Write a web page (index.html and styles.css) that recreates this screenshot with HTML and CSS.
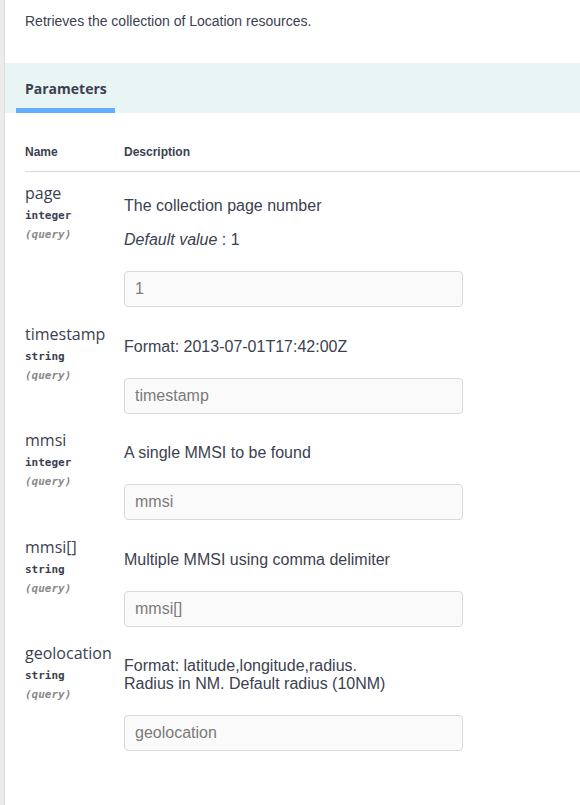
FILE: index.html
```html
<!DOCTYPE html>
<html lang="en">
<head>
<meta charset="utf-8">
<title>Parameters</title>
<link rel="stylesheet" href="styles.css">
</head>
<body>
<div class="opblock">
  <div class="opblock-body">
    <p class="summary">Retrieves the collection of Location resources.</p>
    <div class="section-header">
      <div class="tab">Parameters</div>
    </div>
    <div class="table-container">
      <table class="parameters">
        <thead>
          <tr>
            <th class="col-name">Name</th>
            <th>Description</th>
          </tr>
        </thead>
        <tbody>
          <tr>
            <td class="col-name">
              <div class="param-name">page</div>
              <div class="param-type">integer</div>
              <div class="param-in">(query)</div>
            </td>
            <td class="col-desc">
              <p>The collection page number</p>
              <p><i>Default value</i> : 1</p>
              <input type="text" placeholder="1">
            </td>
          </tr>
          <tr>
            <td class="col-name">
              <div class="param-name">timestamp</div>
              <div class="param-type">string</div>
              <div class="param-in">(query)</div>
            </td>
            <td class="col-desc">
              <p>Format: 2013-07-01T17:42:00Z</p>
              <input type="text" placeholder="timestamp">
            </td>
          </tr>
          <tr>
            <td class="col-name">
              <div class="param-name">mmsi</div>
              <div class="param-type">integer</div>
              <div class="param-in">(query)</div>
            </td>
            <td class="col-desc">
              <p>A single MMSI to be found</p>
              <input type="text" placeholder="mmsi">
            </td>
          </tr>
          <tr>
            <td class="col-name">
              <div class="param-name">mmsi[]</div>
              <div class="param-type">string</div>
              <div class="param-in">(query)</div>
            </td>
            <td class="col-desc">
              <p>Multiple MMSI using comma delimiter</p>
              <input type="text" placeholder="mmsi[]">
            </td>
          </tr>
          <tr>
            <td class="col-name">
              <div class="param-name">geolocation</div>
              <div class="param-type">string</div>
              <div class="param-in">(query)</div>
            </td>
            <td class="col-desc">
              <p>Format: latitude,longitude,radius.<br>Radius in NM. Default radius (10NM)</p>
              <input type="text" placeholder="geolocation">
            </td>
          </tr>
        </tbody>
      </table>
    </div>
  </div>
</div>
</body>
</html>
```

FILE: styles.css
```css
* {
  box-sizing: border-box;
}

html,
body {
  margin: 0;
  padding: 0;
  background: #ffffff;
}

body {
  font-family: "Liberation Sans", Arial, sans-serif;
  color: #3b4151;
}

.opblock {
  border-left: 4px solid #ececec;
}

.opblock-body {
  border-left: 1px solid #dedede;
  min-height: 805px;
}

.summary {
  margin: 0;
  padding: 13px 0 34px 20px;
  font-size: 14px;
  line-height: 16px;
}

.section-header {
  background: #e9f5f5;
  height: 50px;
  padding-left: 11px;
}

.tab {
  display: inline-block;
  height: 50px;
  padding: 16px 8px 0 9px;
  font-family: "Open Sans", sans-serif;
  font-weight: 700;
  font-size: 14px;
  line-height: 20px;
  color: #3b4151;
  border-bottom: 5px solid #61affe;
}

.table-container {
  padding: 20px 0 0 20px;
}

.parameters {
  width: 100%;
  border-collapse: collapse;
}

.parameters th {
  text-align: left;
  font-size: 12px;
  font-weight: 700;
  line-height: 14px;
  padding: 12px 0;
  border-bottom: 1px solid #d9d9d9;
}

.parameters .col-name {
  width: 99px;
}

.parameters td {
  vertical-align: top;
  padding: 10px 0 5.5px;
}

.parameters td.col-desc {
  padding-top: 25px;
}

.param-name {
  font-family: "Open Sans", sans-serif;
  font-size: 16px;
  line-height: 22px;
}

.param-type {
  font-family: "DejaVu Sans Mono", monospace;
  font-size: 11px;
  font-weight: 700;
  line-height: 19px;
  padding-top: 2px;
}

.param-in {
  font-family: "DejaVu Sans Mono", monospace;
  font-size: 11px;
  font-style: italic;
  font-weight: 700;
  line-height: 19px;
  color: #8a8a8a;
}

.col-desc p {
  margin: 0 0 16px;
  font-size: 16px;
  line-height: 18px;
}

.col-desc input {
  display: block;
  width: 339px;
  height: 36px;
  margin: 22px 0 0;
  padding: 0 10px;
  border: 1px solid #d9d9d9;
  border-radius: 4px;
  background: #fafafa;
  font-family: "Liberation Sans", Arial, sans-serif;
  font-size: 16px;
  color: #3b4151;
  outline: none;
}

.col-desc input::placeholder {
  color: #7a7a7a;
  opacity: 1;
}
```
